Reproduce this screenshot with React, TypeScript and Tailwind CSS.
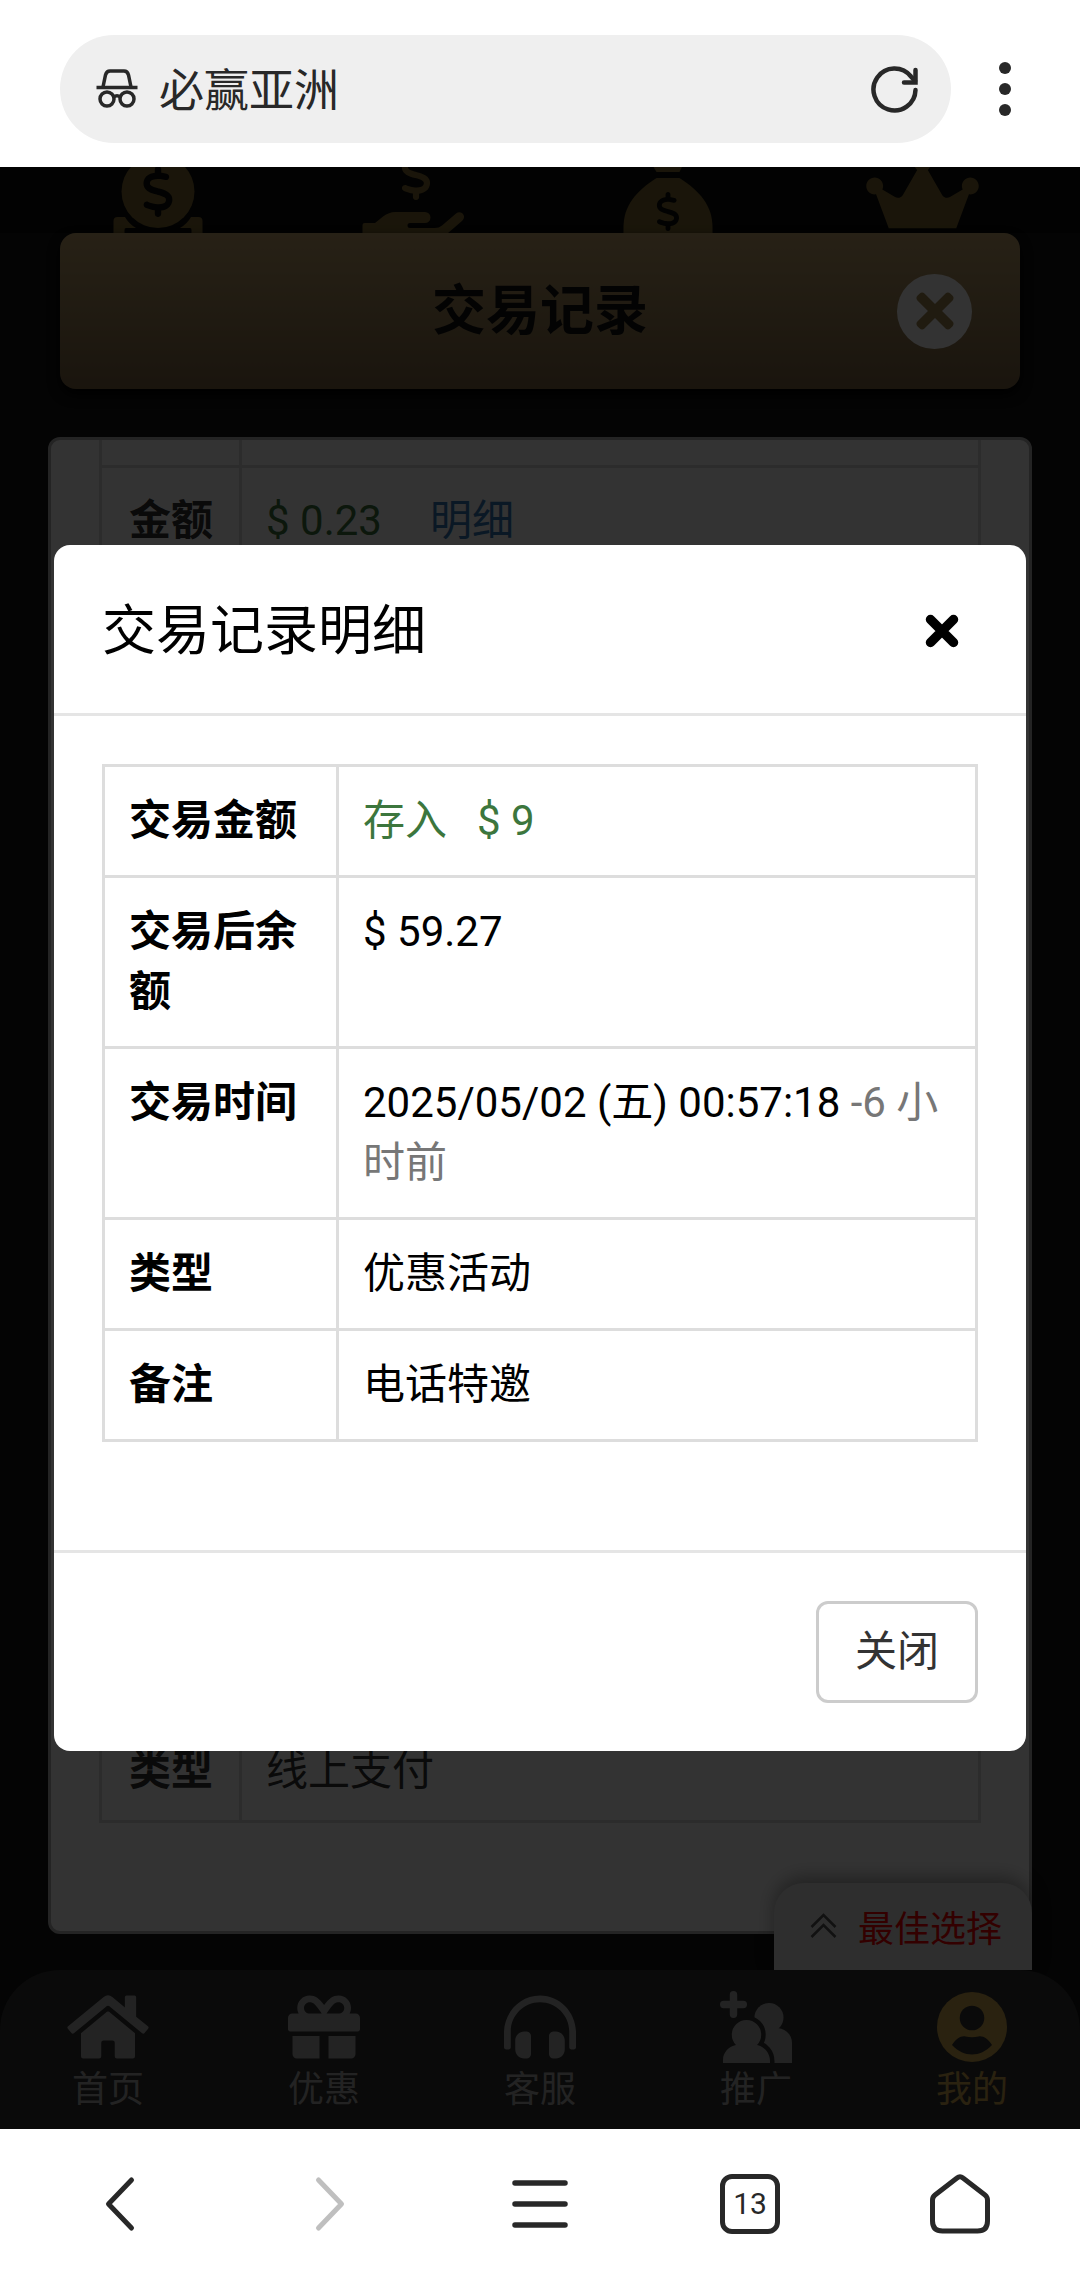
import { useState } from 'react';
import { FaCrown, FaGift, FaHeadphonesAlt, FaHome, FaTimes } from 'react-icons/fa';
import { FaDollarSign } from 'react-icons/fa6';

const cell = 'border-[3px] border-[#ddd] text-left align-top';
const detailCell = `${cell} px-6 py-6`;
const recordHead = `${cell} w-[140px] pl-[27px] pt-[26px] pb-[22px]`;
const recordCell = `${cell} px-6 pt-[26px] pb-[22px]`;

function IncognitoIcon() {
  return (
    <svg className="h-10 w-[42px]" viewBox="0 0 42 40" fill="none" stroke="currentColor" strokeWidth="3.5">
      <path d="M7 18 L9.5 6 Q10.5 2 14 2 H28 Q31.5 2 32.5 6 L35 18" />
      <path d="M0.500 18.500 H41.500" />
      <circle cx="11" cy="30" r="7" />
      <circle cx="31" cy="30" r="7" />
      <path d="M17.500 28 Q21 25.500 24.500 28" />
    </svg>
  );
}

function ReloadIcon() {
  return (
    <svg className="size-12" viewBox="0 0 48 48" fill="none" stroke="currentColor" strokeWidth="4.5" strokeLinecap="round">
      <path d="M44.500 25 A21 21 0 1 1 40 11.500 L44 16" />
      <path d="M44.500 5 V17.500 H33" />
    </svg>
  );
}

function DepositIcon() {
  return (
    <svg className="h-[66px] w-[120px]" viewBox="0 0 120 66" fill="currentColor">
      <circle cx="60" cy="24.500" r="36.500" />
      <path d="M15.500 66 V54 Q15.500 50 19.500 50 H27 Q31 57 38 61 H28 Q26.500 61 26.500 63 V66 Z" />
      <path d="M104.500 66 V54 Q104.500 50 100.500 50 H93 Q89 57 82 61 H92 Q93.500 61 93.500 63 V66 Z" />
      <FaDollarSign x="34.5" y="-1" size={51} color="#0a0a0a" />
    </svg>
  );
}

function WithdrawIcon() {
  return (
    <svg className="h-[66px] w-[120px]" viewBox="0 0 120 66" fill="currentColor">
      <FaDollarSign x="38" y="-17" size={50} />
      <path d="M9.500 66 V58 Q9.500 56 11.500 56 H22 L30 49.500 Q36 45 42 45 H72 A5.500 5.500 0 0 1 72 56 H57 A2.500 2.500 0 0 0 57 61 H82 Q86 61 89 58.500 L103 46.500 C108 42.500 114.500 49 109 54 L95 66 Z" />
    </svg>
  );
}

function WalletIcon() {
  return (
    <svg className="h-[66px] w-[120px]" viewBox="0 0 120 66" fill="currentColor">
      <path d="M45.500 0 H74 L71.500 5 H48.500 Z" />
      <path d="M48.500 11 H71.500 C92 24 104.500 39 104.500 60 V66 H15.500 V60 C15.500 39 28 24 48.500 11 Z" />
      <FaDollarSign x="40.5" y="25" size={39} color="#0a0a0a" />
    </svg>
  );
}

function InviteIcon() {
  const front = 'M3 72 V69 C3 61 9 55.500 16 54 A14.700 14.700 0 1 1 37 54 C44.500 55.500 50 62 50 70 V72 Z';
  return (
    <svg className="size-[72px]" viewBox="0 0 72 72" fill="currentColor">
      <circle cx="49" cy="26.500" r="14.500" />
      <path d="M44 37 H58 C66 38 72 44 72 52 V72 H44 Z" />
      <path d={front} className="stroke-[#333]" strokeWidth="9" />
      <path d={front} />
      <path d="M13.500 3.700 V23.300 M3.700 13.500 H23.300" fill="none" stroke="currentColor" strokeWidth="7.4" strokeLinecap="round" />
    </svg>
  );
}

function ProfileIcon() {
  return (
    <svg className="size-[72px]" viewBox="0 0 72 72" fill="currentColor">
      <circle cx="36" cy="36" r="35" />
      <g className="fill-[#333]">
        <circle cx="36" cy="27" r="12.3" />
        <path d="M16 54 C20 48 25 44.500 29.500 45.500 Q36 47 42.500 45.500 C47 44.500 52 48 56 54 C50 60.500 43 63.500 36 63.500 C29 63.500 22 60.500 16 54 Z" />
      </g>
    </svg>
  );
}

const shortcuts = [
  { label: '存款', icon: <DepositIcon /> },
  { label: '取款', icon: <WithdrawIcon /> },
  { label: '钱包', icon: <WalletIcon /> },
  { label: 'VIP', icon: <FaCrown className="h-[90px] w-[113px]" /> },
];

const tabs = [
  { label: '首页', icon: <FaHome className="h-[72px] w-[82px]" /> },
  { label: '优惠', icon: <FaGift className="size-[72px]" /> },
  { label: '客服', icon: <FaHeadphonesAlt className="size-[72px]" /> },
  { label: '推广', icon: <InviteIcon /> },
  { label: '我的', icon: <ProfileIcon />, active: true },
];

function BrowserTop() {
  return (
    <header className="flex h-[167px] shrink-0 items-center bg-white pt-[11px] pr-[21px] pl-[60px] text-[#282828]">
      <div className="flex h-[108px] flex-1 items-center rounded-full bg-[#efefef] pr-8 pl-9">
        <IncognitoIcon />
        <input
          aria-label="地址栏"
          defaultValue="必赢亚洲"
          className="ml-[21px] min-w-0 flex-1 bg-transparent pt-1.5 text-[45px] leading-[60px] outline-none"
        />
        <button aria-label="刷新">
          <ReloadIcon />
        </button>
      </div>
      <button aria-label="更多" className="mx-12 flex w-3 flex-col gap-[9px]">
        <span className="size-3 rounded-full bg-[#282828]" />
        <span className="size-3 rounded-full bg-[#282828]" />
        <span className="size-3 rounded-full bg-[#282828]" />
      </button>
    </header>
  );
}

function RecordsPage() {
  return (
    <div className="flex flex-1 flex-col bg-[#141414] text-[#333]">
      <div className="grid h-[66px] grid-cols-4 content-center items-center overflow-hidden bg-[#0a0a0a] px-[30px] text-[#806a32]">
        {shortcuts.map((item) => (
          <a key={item.label} href="#" aria-label={item.label} className="flex justify-center">
            {item.icon}
          </a>
        ))}
      </div>

      <div className="mx-[60px] grid h-[156px] grid-cols-[1fr_auto_1fr] items-center rounded-2xl bg-linear-to-b from-[#c3a46e] to-[#806844] px-12 shadow-[0_6px_12px_#000]">
        <h1 className="col-start-2 text-[54px] font-bold text-[#111]">交易记录</h1>
        <button aria-label="关闭页面" className="flex size-[75px] items-center justify-center justify-self-end rounded-full bg-white text-[#a08750]">
          <FaTimes className="size-[54px]" />
        </button>
      </div>

      <div className="mx-12 mt-12 mb-9 flex flex-1 flex-col justify-between rounded-xl border-[3px] border-[#b4b4b4] bg-white px-12 pb-[108px] text-[42px] leading-[54px]">
        <table className="w-full table-fixed border-collapse">
          <tbody>
            <tr className="h-[26px]">
              <th className={`${cell} w-[140px] border-t-0`} />
              <td className={`${cell} border-t-0`} />
            </tr>
            <tr>
              <th className={recordHead}>金额</th>
              <td className={`${recordCell} text-[#3c763d]`}>
                $ 0.23
                <a href="#" className="ml-12 text-[#337ab7]">明细</a>
              </td>
            </tr>
          </tbody>
        </table>
        <table className="w-full table-fixed border-collapse">
          <tbody>
            <tr>
              <th className={recordHead}>类型</th>
              <td className={recordCell}>线上支付</td>
            </tr>
          </tbody>
        </table>
      </div>

      <div className="relative">
        <button className="absolute right-12 bottom-full flex h-[87px] items-center rounded-t-[30px] bg-[#e4e4e4] pr-[30px] pl-9 text-4xl text-[#ff0000] shadow-[0_-6px_18px_rgba(0,0,0,0.35)]">
          <svg className="mr-[21px] h-7 w-[27px] text-[#555]" viewBox="0 0 27 28" fill="none" stroke="currentColor" strokeWidth="2.5">
            <path d="M1.500 14 L13.500 2 L25.500 14 M1.500 24 L13.500 12 L25.500 24" />
          </svg>
          <span className="pt-1.5">最佳选择</span>
        </button>
        <nav className="relative grid grid-cols-5 rounded-t-[60px] bg-[#333] pt-[21px] pb-3">
          {tabs.map((tab) => (
            <a
              key={tab.label}
              href="#"
              className={`flex flex-col items-center text-4xl ${tab.active ? 'text-[#d2aa50]' : 'text-[#b0b0b0]'}`}
            >
              {tab.icon}
              <span className="leading-[54px]">{tab.label}</span>
            </a>
          ))}
        </nav>
      </div>
    </div>
  );
}

function DetailDialog({ onClose }: { onClose: () => void }) {
  return (
    <div className="absolute inset-0 flex items-center justify-center bg-black/80 px-[54px]">
      <div role="dialog" aria-labelledby="detail-title" className="w-full rounded-2xl bg-white text-black">
        <div className="flex h-[171px] items-center justify-between border-b-[3px] border-[#e5e5e5] px-12 pt-1">
          <h2 id="detail-title" className="text-[54px]">交易记录明细</h2>
          <button aria-label="关闭" onClick={onClose} className="mr-[18px]">
            <svg className="size-[36px]" viewBox="0 0 36 36" fill="none" stroke="currentColor" strokeWidth="9.5" strokeLinecap="round">
              <path d="M6.500 6.500 L29.500 29.500 M29.500 6.500 L6.500 29.500" />
            </svg>
          </button>
        </div>
        <div className="px-12 pt-12 pb-[108px] text-[42px] leading-[60px]">
          <table className="w-full table-fixed border-collapse">
            <tbody>
              <tr>
                <th className={`${detailCell} w-[234px]`}>交易金额</th>
                <td className={`${detailCell} text-[#3c763d]`}>
                  存入<span className="ml-[30px]">$ 9</span>
                </td>
              </tr>
              <tr>
                <th className={detailCell}>交易后余额</th>
                <td className={detailCell}>$ 59.27</td>
              </tr>
              <tr>
                <th className={detailCell}>交易时间</th>
                <td className={detailCell}>
                  2025/05/02 (五) 00:57:18 <span className="text-[#777]">-6 小时前</span>
                </td>
              </tr>
              <tr>
                <th className={detailCell}>类型</th>
                <td className={detailCell}>优惠活动</td>
              </tr>
              <tr>
                <th className={detailCell}>备注</th>
                <td className={detailCell}>电话特邀</td>
              </tr>
            </tbody>
          </table>
        </div>
        <div className="flex justify-end border-t-[3px] border-[#e5e5e5] p-12">
          <button
            onClick={onClose}
            className="h-[102px] rounded-xl border-[3px] border-[#ccc] px-9 text-[42px] leading-[60px] text-[#333]"
          >
            关闭
          </button>
        </div>
      </div>
    </div>
  );
}

function BrowserBottom() {
  return (
    <footer className="grid h-[153px] shrink-0 grid-cols-5 items-center justify-items-center bg-white px-[15px] pb-[3px] text-[#282828]">
      <button aria-label="后退">
        <svg className="size-[60px]" viewBox="0 0 60 60" fill="none" stroke="currentColor" strokeWidth="5" strokeLinecap="round" strokeLinejoin="round">
          <path d="M41.500 6 L18.500 30 L41.500 54" />
        </svg>
      </button>
      <button aria-label="前进" className="text-[#bfbfbf]">
        <svg className="size-[60px]" viewBox="0 0 60 60" fill="none" stroke="currentColor" strokeWidth="5" strokeLinecap="round" strokeLinejoin="round">
          <path d="M18.500 6 L41.500 30 L18.500 54" />
        </svg>
      </button>
      <button aria-label="菜单">
        <svg className="size-[60px]" viewBox="0 0 60 60" fill="none" stroke="currentColor" strokeWidth="5.5" strokeLinecap="round">
          <path d="M5 9 H55 M5 30 H55 M5 51 H55" />
        </svg>
      </button>
      <button className="flex size-[60px] items-center justify-center rounded-xl border-[5px] border-[#282828] text-3xl">
        13
      </button>
      <button aria-label="主页">
        <svg className="size-[60px]" viewBox="0 0 60 60" fill="none" stroke="currentColor" strokeWidth="5" strokeLinejoin="round">
          <path d="M27 4 Q30 1.500 33 4 L55 21 Q57.500 23 57.500 26 V47 Q57.500 57 47.500 57 H12.500 Q2.500 57 2.500 47 V26 Q2.500 23 5 21 Z" />
        </svg>
      </button>
    </footer>
  );
}

export default function App() {
  const [open, setOpen] = useState(true);

  return (
    <div className="flex min-h-screen flex-col font-[Roboto,'Noto_Sans_CJK_SC',sans-serif]">
      <BrowserTop />
      <main className="relative flex flex-1 flex-col">
        <RecordsPage />
        {open && <DetailDialog onClose={() => setOpen(false)} />}
      </main>
      <BrowserBottom />
    </div>
  );
}
